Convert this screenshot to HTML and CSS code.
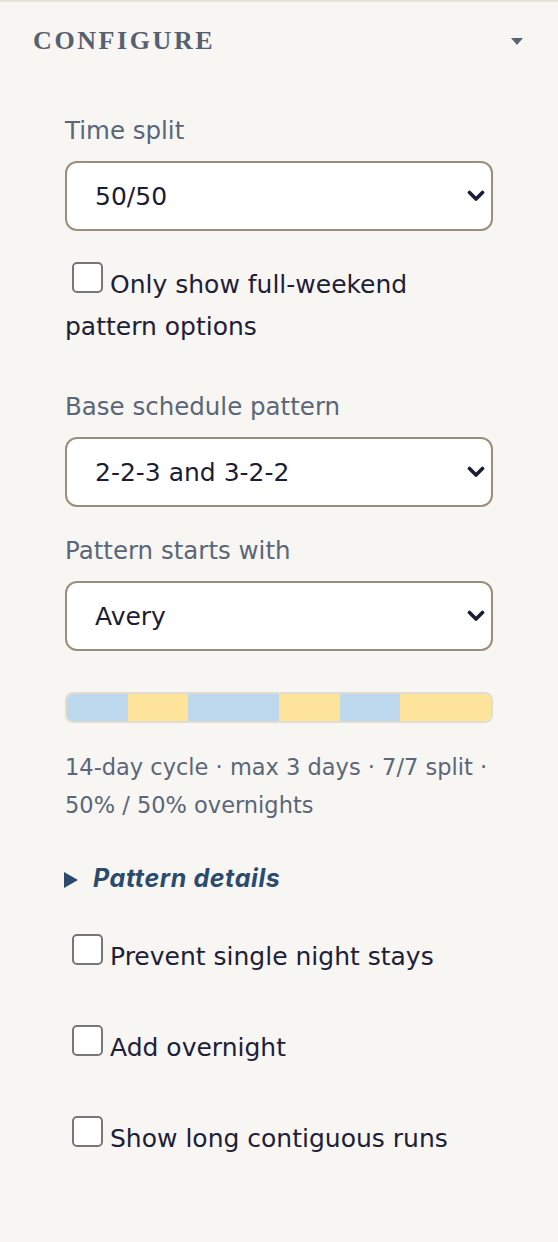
FILE: index.html
```html
<!DOCTYPE html>
<html lang="en">
<head>
    <meta charset="UTF-8">
    <link rel="stylesheet" href="styles.css">
</head>
<body>
    <div class="panel">
        <div class="panel-head">
            <h2 class="title">Configure</h2>
            <span class="caret"></span>
        </div>
        <div class="panel-body">
            <label class="lbl" for="split">Time split</label>
            <div class="sel">
                <select id="split">
                    <option>50/50</option>
                    <option>60/40</option>
                    <option>70/30</option>
                </select>
                <svg class="chev" width="18" height="12" viewBox="0 0 18 12"><path d="M2.5 2.5 L9 9 L15.5 2.5" fill="none" stroke="#1c1d33" stroke-width="3.6" stroke-linecap="round" stroke-linejoin="round"/></svg>
            </div>

            <label class="chk first"><input type="checkbox">Only show full-weekend pattern options</label>

            <label class="lbl gap-l" for="base">Base schedule pattern</label>
            <div class="sel">
                <select id="base">
                    <option>2-2-3 and 3-2-2</option>
                    <option>2-2-5-5</option>
                    <option>Alternating weeks</option>
                </select>
                <svg class="chev" width="18" height="12" viewBox="0 0 18 12"><path d="M2.5 2.5 L9 9 L15.5 2.5" fill="none" stroke="#1c1d33" stroke-width="3.6" stroke-linecap="round" stroke-linejoin="round"/></svg>
            </div>

            <label class="lbl gap-m" for="start">Pattern starts with</label>
            <div class="sel">
                <select id="start">
                    <option>Avery</option>
                    <option>Jordan</option>
                </select>
                <svg class="chev" width="18" height="12" viewBox="0 0 18 12"><path d="M2.5 2.5 L9 9 L15.5 2.5" fill="none" stroke="#1c1d33" stroke-width="3.6" stroke-linecap="round" stroke-linejoin="round"/></svg>
            </div>

            <div class="bar">
                <span class="a" style="flex: 2"></span>
                <span class="b" style="flex: 2"></span>
                <span class="a" style="flex: 3"></span>
                <span class="b" style="flex: 2"></span>
                <span class="a" style="flex: 2"></span>
                <span class="b" style="flex: 3"></span>
            </div>
            <p class="stats">14-day cycle · max 3 days · 7/7 split · 50% / 50% overnights</p>

            <details class="more">
                <summary>Pattern details</summary>
            </details>

            <label class="chk opt"><input type="checkbox">Prevent single night stays</label>
            <label class="chk opt2"><input type="checkbox">Add overnight</label>
            <label class="chk opt2"><input type="checkbox">Show long contiguous runs</label>
        </div>
    </div>
</body>
</html>
```

FILE: styles.css
```css
body{
    margin: 0;
    background: #f7f6f2;
    font-family: "DejaVu Sans", "Noto Sans", sans-serif;
}
.panel{
    border-top: 2px solid #e8e3da;
    border-bottom: 3px solid #e8e3da;
}
.panel-head{
    height: 78px;
    display: flex;
    align-items: center;
    justify-content: space-between;
    padding: 0 35px 0 33px;
}
.title{
    margin: 0;
    font-family: "Liberation Serif", serif;
    font-weight: bold;
    font-size: 26px;
    letter-spacing: 2.6px;
    text-transform: uppercase;
    color: #566070;
}
.caret{
    width: 0;
    height: 0;
    border-left: 6px solid transparent;
    border-right: 6px solid transparent;
    border-top: 7px solid #5a6474;
}
.panel-body{
    padding: 33px 65px 82px;
}
.lbl{
    display: block;
    font-size: 24.5px;
    line-height: 36px;
    color: #5b6678;
    margin-bottom: 12px;
}
.gap-l{ margin-top: 41px; }
.gap-m{ margin-top: 26px; }
.sel{
    position: relative;
}
.sel select{
    display: block;
    width: 100%;
    height: 70px;
    -webkit-appearance: none;
    appearance: none;
    background: #fff;
    border: 2px solid #998f7e;
    border-radius: 12px;
    padding: 0 50px 0 28px;
    font-family: "DejaVu Sans", "Noto Sans", sans-serif;
    font-size: 25px;
    color: #1c1d33;
}
.chev{
    position: absolute;
    right: 8px;
    top: 29px;
}
.chk{
    display: block;
    font-size: 25px;
    line-height: 42px;
    color: #1e2038;
}
.chk input{
    -webkit-appearance: none;
    appearance: none;
    width: 31px;
    height: 31px;
    margin: 0 7px;
    vertical-align: baseline;
    background: #fff;
    border: 2px solid #777;
    border-radius: 5px;
}
.first{ margin-top: 31px; }
.bar{
    display: flex;
    height: 31px;
    margin-top: 41px;
    border: 2px solid #e2ddd3;
    border-radius: 8px;
    overflow: hidden;
    box-sizing: border-box;
}
.bar .a{ background: #bdd7ec; }
.bar .b{ background: #fde49a; }
.stats{
    margin: 25px 0 0;
    font-size: 22.5px;
    line-height: 38px;
    color: #5b6678;
}
.more{
    margin-top: 36px;
}
.more summary{
    list-style: none;
    font-family: Inter, "Noto Sans", sans-serif;
    font-size: 25px;
    letter-spacing: 0.6px;
    line-height: 36px;
    font-weight: bold;
    font-style: italic;
    color: #2b4a6f;
    cursor: pointer;
}
.more summary::-webkit-details-marker{
    display: none;
}
.more summary::before{
    content: "";
    display: inline-block;
    border-left: 14px solid #2b4a6f;
    border-top: 8.5px solid transparent;
    border-bottom: 8.5px solid transparent;
    margin: 0 15px 0 -1px;
    vertical-align: -1px;
}
.opt{ margin-top: 38px; }
.opt2{ margin-top: 47px; }
```
